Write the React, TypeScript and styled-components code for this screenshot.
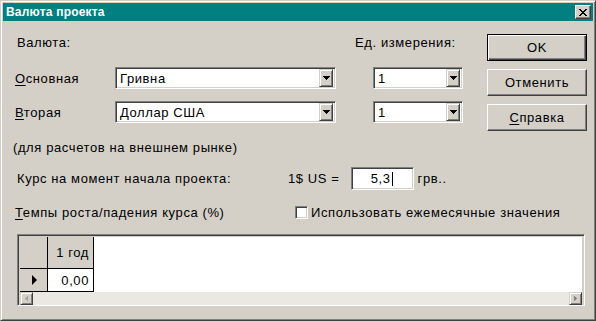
import React from 'react';
import styled, { createGlobalStyle } from 'styled-components';

const FACE = '#d4d0c8';
const SHADOW = '#808080';
const DARK = '#404040';

const GlobalStyle = createGlobalStyle`
  html, body {
    margin: 0;
    padding: 0;
    background: ${FACE};
  }
  body {
    font-family: "Liberation Sans", Arial, sans-serif;
    font-size: 13px;
    letter-spacing: 0.6px;
    color: #000;
  }
`;

const Window = styled.div`
  width: 596px;
  height: 321px;
  box-sizing: border-box;
  background: ${FACE};
  border: 1px solid;
  border-color: ${FACE} ${DARK} ${DARK} ${FACE};
  box-shadow: inset 1px 1px #fff, inset -1px -1px ${SHADOW};
  padding: 2px;
  display: flex;
  flex-direction: column;
  overflow: hidden;
`;

const TitleBar = styled.div`
  height: 18px;
  background: #008080;
  color: #fff;
  font-weight: bold;
  font-size: 12px;
  letter-spacing: 0.2px;
  display: flex;
  align-items: center;
  justify-content: space-between;
  padding: 0 2px 0 3px;
`;

const CloseButton = styled.div`
  width: 16px;
  height: 14px;
  box-sizing: border-box;
  background: ${FACE};
  border: 1px solid;
  border-color: #fff ${DARK} ${DARK} #fff;
  box-shadow: inset -1px -1px ${SHADOW};
  display: flex;
  align-items: center;
  justify-content: center;
`;

const Body = styled.div`
  flex: 1;
  padding: 13px 6px 0 10px;
`;

const Top = styled.div`
  display: flex;
`;

const FormArea = styled.div`
  width: 474px;
  flex-shrink: 0;
  display: flex;
  flex-direction: column;
`;

const Row = styled.div<{ $mt: number; $h: number }>`
  display: flex;
  align-items: center;
  margin-top: ${p => p.$mt}px;
  height: ${p => p.$h}px;
`;

const Label = styled.div<{ $w?: number; $indent?: number; $ml?: number }>`
  width: ${p => (p.$w ? `${p.$w}px` : 'auto')};
  padding-left: ${p => p.$indent ?? 0}px;
  margin-left: ${p => p.$ml ?? 0}px;
  box-sizing: border-box;
  white-space: nowrap;
  flex-shrink: 0;
`;

const U = styled.span`
  text-decoration: underline;
  text-underline-offset: 2px;
`;

const Sunken = styled.div`
  box-sizing: border-box;
  background: #fff;
  border: 1px solid;
  border-color: ${SHADOW} #fff #fff ${SHADOW};
  box-shadow: inset 1px 1px ${DARK}, inset -1px -1px ${FACE};
`;

const Combo = styled(Sunken)<{ $w: number; $ml?: number }>`
  width: ${p => p.$w}px;
  height: 22px;
  margin-left: ${p => p.$ml ?? 0}px;
  display: flex;
  align-items: center;
  padding: 2px;
  flex-shrink: 0;
`;

const ComboText = styled.div`
  flex: 1;
  padding-left: 2px;
  white-space: nowrap;
`;

const DropButton = styled.div`
  width: 14px;
  height: 18px;
  box-sizing: border-box;
  background: ${FACE};
  border: 1px solid;
  border-color: ${FACE} ${DARK} ${DARK} ${FACE};
  box-shadow: inset 1px 1px #fff, inset -1px -1px ${SHADOW};
  display: flex;
  align-items: center;
  justify-content: center;
`;

const EditBox = styled(Sunken)`
  width: 63px;
  height: 23px;
  margin-left: 11px;
  display: flex;
  align-items: center;
  justify-content: flex-end;
  padding-right: 20px;
  flex-shrink: 0;
`;

const Caret = styled.span`
  width: 1px;
  height: 14px;
  background: #000;
  margin-left: 1px;
`;

const CheckBox = styled(Sunken)`
  width: 13px;
  height: 13px;
  margin-right: 3px;
  flex-shrink: 0;
`;

const ButtonColumn = styled.div`
  width: 100px;
  flex-shrink: 0;
  display: flex;
  flex-direction: column;
  gap: 8px;
`;

const Button = styled.div<{ $default?: boolean }>`
  height: 27px;
  box-sizing: border-box;
  background: ${FACE};
  display: flex;
  align-items: center;
  justify-content: center;
  border: 1px solid;
  border-color: ${p => (p.$default ? '#000' : `#fff ${DARK} ${DARK} #fff`)};
  box-shadow: ${p =>
    p.$default
      ? `inset 1px 1px #fff, inset -1px -1px ${DARK}, inset -2px -2px ${SHADOW}`
      : `inset -1px -1px ${SHADOW}`};
`;

const Grid = styled.div`
  margin-top: 14px;
  margin-left: 4px;
  width: 568px;
  height: 72px;
  box-sizing: border-box;
  border: 1px solid;
  border-color: ${SHADOW} #fff #fff ${SHADOW};
  box-shadow: inset 1px 1px ${DARK}, inset -1px -1px ${FACE};
  padding: 2px 2px 1px 2px;
  display: grid;
  grid-template-columns: 28px 46px 1fr;
  grid-template-rows: 32px 23px 13px;
`;

const Cell = styled.div<{ $fixed?: boolean }>`
  background: ${p => (p.$fixed ? FACE : '#fff')};
  border-right: 1px solid #000;
  border-bottom: 1px solid #000;
  display: flex;
  align-items: center;
  justify-content: flex-end;
  padding-right: 4px;
`;

const IndicatorCell = styled(Cell)`
  justify-content: center;
  padding: 0 0 0 2px;
`;

const Pointer = styled.div`
  width: 0;
  height: 0;
  border-top: 5px solid transparent;
  border-bottom: 5px solid transparent;
  border-left: 5px solid #000;
`;

const EmptyArea = styled.div`
  grid-column: 3;
  grid-row: 1 / 3;
  background: #fff;
`;

const ScrollBar = styled.div`
  grid-column: 1 / 4;
  display: flex;
  background: #ebe8e2;
`;

const ScrollButton = styled.div`
  width: 13px;
  height: 13px;
  box-sizing: border-box;
  background: ${FACE};
  border: 1px solid;
  border-color: ${FACE} ${DARK} ${DARK} ${FACE};
  box-shadow: inset 1px 1px #fff, inset -1px -1px ${SHADOW};
  display: flex;
  align-items: center;
  justify-content: center;
`;

const Track = styled.div`
  flex: 1;
`;

const DownArrow = () => (
  <svg width="7" height="4" viewBox="0 0 7 4" shapeRendering="crispEdges">
    <path d="M0 0h7v1h-1v1h-1v1h-1v1h-1v-1h-1v-1h-1v-1h-1z" fill="#000" />
  </svg>
);

const SideArrow = ({ dir, color }: { dir: 'left' | 'right'; color: string }) => (
  <svg width="3" height="5" viewBox="0 0 3 5" shapeRendering="crispEdges">
    {dir === 'left' ? (
      <path d="M2 0h1v5h-1v-1h-1v-1h-1v-1h1v-1h1z" fill={color} />
    ) : (
      <path d="M0 0h1v1h1v1h1v1h-1v1h-1v1h-1z" fill={color} />
    )}
  </svg>
);

const CloseGlyph = () => (
  <svg width="8" height="7" viewBox="0 0 8 7" shapeRendering="crispEdges">
    <path
      d="M0 0h2v1h1v1h2v-1h1v-1h2v1h-1v1h-1v1h-1v1h1v1h1v1h1v1h-2v-1h-1v-1h-2v1h-1v1h-2v-1h1v-1h1v-1h1v-1h-1v-1h-1v-1h-1z"
      fill="#000"
    />
  </svg>
);

const ComboBox = ({ value, width, ml }: { value: string; width: number; ml?: number }) => (
  <Combo $w={width} $ml={ml}>
    <ComboText>{value}</ComboText>
    <DropButton>
      <DownArrow />
    </DropButton>
  </Combo>
);

export default function App() {
  return (
    <>
      <GlobalStyle />
      <Window>
        <TitleBar>
          <span>Валюта проекта</span>
          <CloseButton>
            <CloseGlyph />
          </CloseButton>
        </TitleBar>
        <Body>
          <Top>
            <FormArea>
              <Row $mt={0} $h={16}>
                <Label $w={342} $indent={4}>Валюта:</Label>
                <Label>Ед. измерения:</Label>
              </Row>
              <Row $mt={17} $h={22}>
                <Label $w={102} $indent={2}>
                  <U>О</U>сновная
                </Label>
                <ComboBox value="Гривна" width={221} />
                <ComboBox value="1" width={90} ml={37} />
              </Row>
              <Row $mt={12} $h={22}>
                <Label $w={102} $indent={2}>
                  <U>В</U>торая
                </Label>
                <ComboBox value="Доллар США" width={221} />
                <ComboBox value="1" width={90} ml={37} />
              </Row>
              <Row $mt={16} $h={16}>
                <Label>(для расчетов на внешнем рынке)</Label>
              </Row>
              <Row $mt={12} $h={23}>
                <Label $w={275} $indent={4}>Курс на момент начала проекта:</Label>
                <Label>1$ US =</Label>
                <EditBox>
                  5,3
                  <Caret />
                </EditBox>
                <Label $ml={4}>грв..</Label>
              </Row>
              <Row $mt={14} $h={16}>
                <Label $w={282} $indent={2}>
                  <U>Т</U>емпы роста/падения курса (%)
                </Label>
                <CheckBox />
                <Label>Использовать ежемесячные значения</Label>
              </Row>
            </FormArea>
            <ButtonColumn>
              <Button $default>OK</Button>
              <Button>Отменить</Button>
              <Button>
                <span>
                  <U>С</U>правка
                </span>
              </Button>
            </ButtonColumn>
          </Top>
          <Grid>
            <IndicatorCell $fixed />
            <Cell $fixed>1 год</Cell>
            <EmptyArea />
            <IndicatorCell $fixed>
              <Pointer />
            </IndicatorCell>
            <Cell>0,00</Cell>
            <ScrollBar>
              <ScrollButton>
                <SideArrow dir="left" color="#a8a49c" />
              </ScrollButton>
              <Track />
              <ScrollButton>
                <SideArrow dir="right" color={SHADOW} />
              </ScrollButton>
            </ScrollBar>
          </Grid>
        </Body>
      </Window>
    </>
  );
}
